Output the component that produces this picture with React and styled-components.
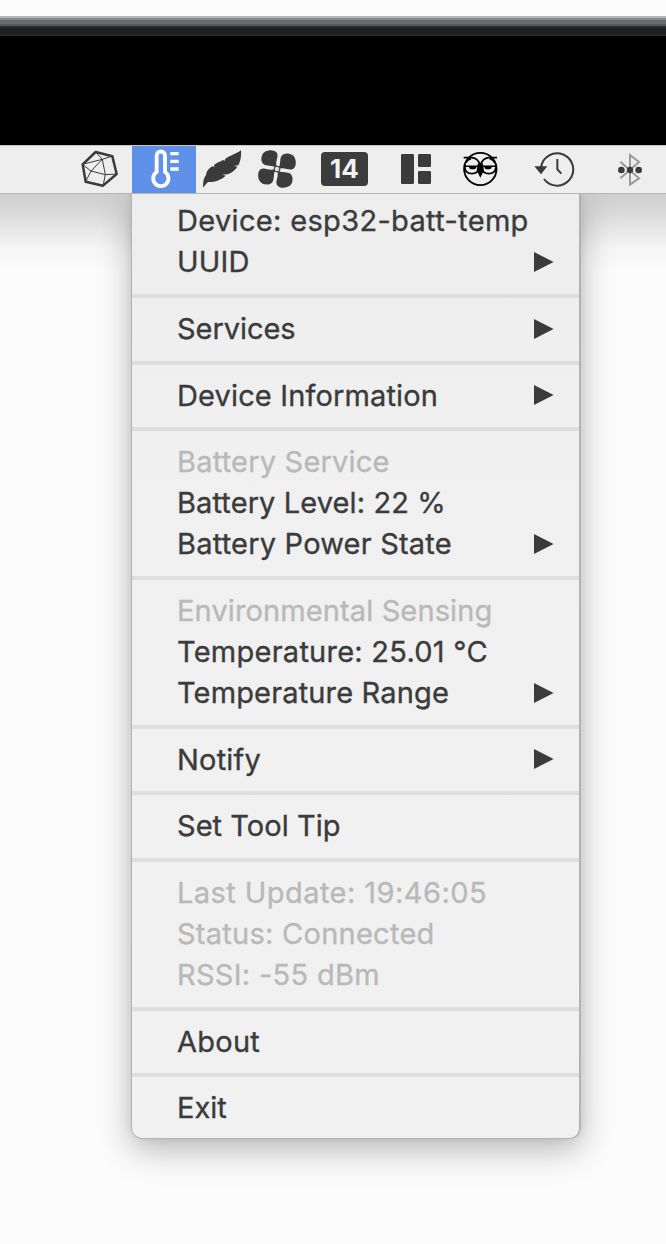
import React from "react";
import styled, { createGlobalStyle } from "styled-components";

const GlobalStyle = createGlobalStyle`
  * { box-sizing: border-box; }
  body { margin: 0; background: #fcfcfc; }
`;

const Screen = styled.div`
  width: 666px;
  height: 1244px;
  overflow: hidden;
  display: flex;
  flex-direction: column;
  background: #fcfcfc;
  font-family: Inter, "Liberation Sans", sans-serif;
  color: #3b3b3b;
`;

const Bezel = styled.div`
  flex: none;
  height: 145px;
  background: linear-gradient(
    #fcfcfc 0 16px, #b4b5b8 16px 18px, #88898c 18px 20px, #6b6c70 20px 24px,
    #55565a 24px 26px, #292a31 26px 28px, #1f1f1f 28px 34px, #292929 34px 36px, #000 36px
  );
`;

const MenuBar = styled.nav`
  flex: none;
  height: 49px;
  display: flex;
  align-items: stretch;
  padding-left: 70px;
  background: #eeeeee;
  border-top: 1px solid #c6c6c6;
  border-bottom: 1px solid #b5b5b5;
`;

const Slot = styled.div`
  flex: none;
  width: ${(p) => p.$width}px;
  display: flex;
  align-items: center;
  justify-content: center;
  background: ${(p) => (p.$active ? "#6091e9" : "transparent")};
  svg { display: block; flex: none; width: 100%; height: 47px; }
`;

const Badge = styled.div`
  width: 47px;
  height: 34px;
  margin-bottom: 1px;
  border-radius: 4px;
  background: #3c3c3c;
  color: #f2f2f2;
  font-size: 26px;
  font-weight: 700;
  line-height: 33px;
  text-align: center;
`;

const Desktop = styled.main`
  flex: 1;
  padding-left: 131px;
  background: linear-gradient(#cfcfcf 0, #d6d6d6 14px, #e6e6e6 34px, #f5f5f5 54px, #fcfcfc 76px);
`;

const Menu = styled.section`
  width: 450px;
  height: 945px;
  padding: 6.4px 0 0;
  background: linear-gradient(#ededed, #f0f0f0 25%, #f1f1f1);
  border: 1px solid #b3b3b3;
  border-top: 0;
  border-right-width: 2px;
  border-radius: 0 0 11px 11px;
  box-shadow: 0 11px 34px rgba(0, 0, 0, 0.27), 0 0 10px rgba(0, 0, 0, 0.08);
  clip-path: inset(0 -80px -100px -80px);
`;

const Item = styled.div`
  height: 41px;
  display: flex;
  align-items: center;
  justify-content: space-between;
  padding: 0 25px 0 45px;
  font-size: 29px;
  line-height: 41px;
  white-space: nowrap;
  color: ${(p) => (p.$muted ? "#b9b9b9" : "#3b3b3b")};
  -webkit-text-stroke: 0.35px currentColor;
  letter-spacing: ${(p) => p.$tracking}px;
  svg { width: 20px; height: 20px; }
`;

const Divider = styled.div`
  height: 4px;
  margin: 11.67px 0 10px;
  background: #dedede;
`;

const groups = [
  [["Device: esp32-batt-temp", 0.33], ["UUID", 0.2, "more"]],
  [["Services", -0.05, "more"]],
  [["Device Information", 0.14, "more"]],
  [["Battery Service", 0.2, "muted"], ["Battery Level: 22 %", 0.1], ["Battery Power State", 0.2, "more"]],
  [["Environmental Sensing", 0.12, "muted"], ["Temperature: 25.01 °C", 0.25], ["Temperature Range", 0.15, "more"]],
  [["Notify", 0.2, "more"]],
  [["Set Tool Tip", 0.05]],
  [["Last Update: 19:46:05", 0.44, "muted"], ["Status: Connected", 0.26, "muted"], ["RSSI: -55 dBm", 0.3, "muted"]],
  [["About", 0.25]],
  [["Exit", 0]],
];

const Arrow = () => (
  <svg viewBox="0 0 20 20"><path d="M0 0L19.6 10L0 20Z" fill="#3b3b3b" /></svg>
);

const Polyhedron = () => (
  <svg viewBox="0 18 186 141" fill="none" stroke="#3b3b3b" strokeLinejoin="round">
    <path strokeWidth="7.5" d="M77 36L127 49L140 102L99 137L47 125L38 73Z" />
    <path strokeWidth="3" d="M77 36L97 58L127 48M37 73L97 58L63 93L37 73M63 93L47 125M63 93L106 104L97 58M106 104L140 102M106 104L99 138" />
  </svg>
);

const Thermometer = () => (
  <svg viewBox="186 18 192 141" fill="none" stroke="#fff">
    <path strokeWidth="11.5" d="M260 47A12.5 12.5 0 0 1 285 47V96A23 23 0 1 1 260 96Z" />
    <path strokeWidth="10" d="M301 41H326M301 64H326M301 87H326" />
  </svg>
);

const Feather = () => (
  <svg viewBox="3 18 165 141">
    <path fill="#3b3b3b" d="M138 30C129 40 104 46 90 57L90 62L84 60C76 66 64 68 57 75L59 80L52 79C41 86 34 94 33 105C25 116 23 129 25 143C30 135 34 131 39 126C54 128 78 121 92 107L82 104L98 103C111 98 120 91 127 80L117 78L130 76C136 65 140 48 138 30Z" />
  </svg>
);

const petal = "M243 82C230 75 215 80 206 73C195 64 198 42 210 35C221 29 239 28 246 39C252 51 240 62 245 80Z";
const Fan = () => (
  <svg viewBox="168 18 159 141" fill="#3b3b3b">
    {[0, 90, 180, 270].map((a) => <path key={a} d={petal} transform={`rotate(${a} 246 87)`} />)}
    <circle cx="246" cy="87" r="10" />
    <circle cx="246" cy="87" r="7" fill="#dddddd" />
  </svg>
);

const Panels = () => (
  <svg viewBox="45 18 180 141" fill="#3b3b3b">
    <rect x="93" y="42" width="39" height="90" rx="4" />
    <rect x="144" y="42" width="39" height="39" rx="4" />
    <rect x="144" y="93" width="39" height="39" rx="4" />
  </svg>
);

const Owl = () => (
  <svg viewBox="225 18 210 141" fill="none" stroke="#000">
    <circle cx="331" cy="87" r="48.5" strokeWidth="5.5" />
    <path strokeWidth="5" d="M281 53H306C319 54 327 62 331 77C335 62 343 54 356 53H381" />
    <path strokeWidth="4.5" d="M284 79H324M338 79H378" />
    <path strokeWidth="5" d="M284 82C286 94 295 101 306 101C317 101 325 94 328 84M378 82C376 94 367 101 356 101C345 101 337 94 334 84" />
    <path strokeWidth="5" d="M288 68Q292 59 303 56M374 68Q370 59 359 56M284 72V96M378 72V96" />
    <path fill="#000" stroke="none" d="M297 80H319A11 8 0 0 1 297 80ZM343 80H365A11 8 0 0 1 343 80ZM324 68L331 77L338 68L342 91L331 113L320 91Z" />
  </svg>
);

const History = () => (
  <svg viewBox="15 18 225 141" fill="none" stroke="#3b3b3b" strokeWidth="6">
    <path d="M93 83A48.5 48.5 0 1 1 102 117" />
    <path d="M142 57V88L154 101" />
    <path d="M73 79H112L93 103Z" fill="#3b3b3b" stroke="none" />
  </svg>
);

const Bluetooth = () => (
  <svg viewBox="240 18 228 141" fill="none">
    <path stroke="#999" strokeWidth="6" d="M331 65L387 115L360 134V45L387 66L331 115" />
    <g fill="#3b3b3b"><circle cx="334" cy="90" r="10" /><circle cx="360" cy="90" r="9.5" /><circle cx="386" cy="90" r="10" /></g>
  </svg>
);

export default function App() {
  return (
    <Screen>
      <GlobalStyle />
      <Bezel />
      <MenuBar>
        <Slot $width={62}><Polyhedron /></Slot>
        <Slot $width={64} $active><Thermometer /></Slot>
        <Slot $width={55}><Feather /></Slot>
        <Slot $width={53}><Fan /></Slot>
        <Slot $width={81}><Badge>14</Badge></Slot>
        <Slot $width={60}><Panels /></Slot>
        <Slot $width={70}><Owl /></Slot>
        <Slot $width={75}><History /></Slot>
        <Slot $width={76}><Bluetooth /></Slot>
      </MenuBar>
      <Desktop>
        <Menu>
          {groups.map((items, i) => (
            <React.Fragment key={i}>
              {i > 0 && <Divider />}
              {items.map(([label, tracking, kind]) => (
                <Item key={label} $tracking={tracking} $muted={kind === "muted"}>
                  <span>{label}</span>
                  {kind === "more" && <Arrow />}
                </Item>
              ))}
            </React.Fragment>
          ))}
        </Menu>
      </Desktop>
    </Screen>
  );
}
